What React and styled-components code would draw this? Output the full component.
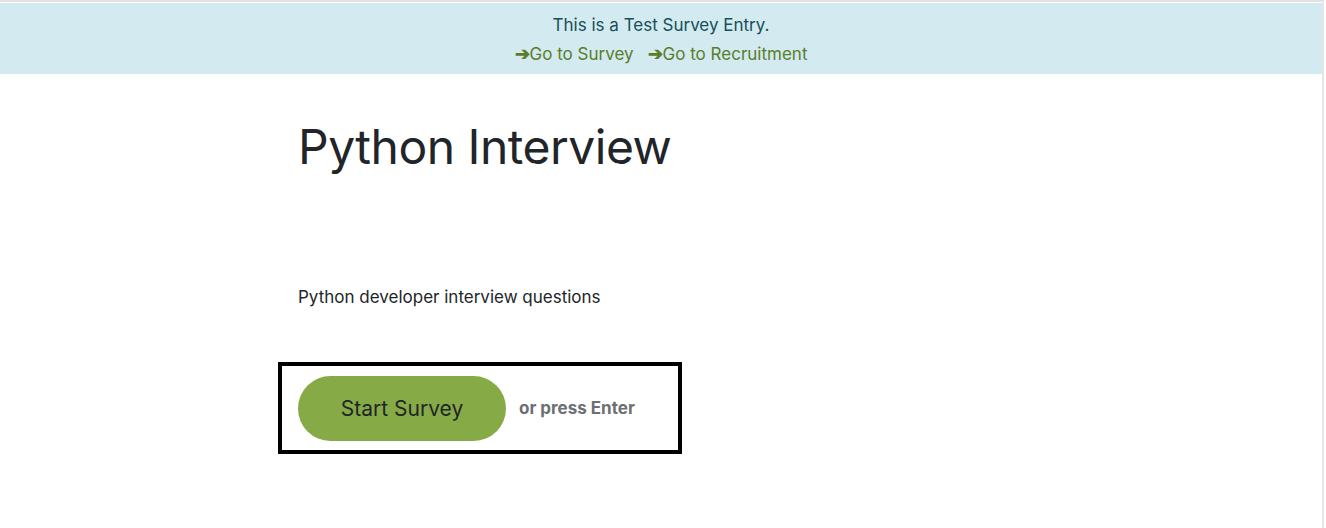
import React from "react";
import styled, { createGlobalStyle } from "styled-components";

const Global = createGlobalStyle`
  html, body { margin: 0; padding: 0; background: #ffffff; }
  body { font-family: Inter, "Noto Sans", sans-serif; color: #212529; }
`;

const Frame = styled.div`
  width: 1322px;
  height: 526px;
  border-top: 2px solid #e2e2e2;
  border-right: 2px solid #e6e6e6;
  background: #ffffff;
  overflow: hidden;
`;

const Banner = styled.div`
  margin-top: 1px;
  background: #d2eaf0;
  height: 71px;
  display: flex;
  flex-direction: column;
  align-items: center;
  padding-top: 9px;
  box-sizing: border-box;
  font-size: 17px;
`;

const BannerText = styled.div`
  color: #174f58;
  line-height: 26px;
`;

const Links = styled.div`
  display: flex;
  gap: 14px;
  line-height: 26px;
  margin-top: 3px;
`;

const Link = styled.a`
  color: #5b7d2b;
  text-decoration: none;
  font-size: 17px;
`;

const Arrow = styled.span`
  font-weight: 700;
  font-size: 18px;
`;

const Main = styled.main`
  padding-left: 298px;
  display: flex;
  flex-direction: column;
  align-items: flex-start;
`;

const Title = styled.h1`
  margin: 40px 0 0;
  font-size: 48px;
  font-weight: 400;
  line-height: 66px;
  letter-spacing: -0.5px;
  color: #212529;
`;

const Description = styled.p`
  margin: 104px 0 0;
  font-size: 17px;
  line-height: 26px;
  color: #212529;
`;

const ActionBox = styled.div`
  margin: 52px 0 0 -20px;
  width: 380px;
  height: 84px;
  border: 4px solid #000000;
  display: flex;
  align-items: center;
  gap: 13px;
  padding-left: 16px;
  box-sizing: content-box;
`;

const StartButton = styled.button`
  width: 208px;
  height: 65px;
  border: none;
  border-radius: 33px;
  background: #86aa45;
  color: #212529;
  font-family: Inter, "Noto Sans", sans-serif;
  font-size: 21px;
  font-weight: 400;
  cursor: pointer;
  padding: 0;
`;

const Hint = styled.span`
  font-size: 17px;
  font-weight: 700;
  color: #6c6f73;
`;

export default function App() {
  return (
    <>
      <Global />
      <Frame>
        <Banner>
          <BannerText>This is a Test Survey Entry.</BannerText>
          <Links>
            <Link href="#"><Arrow>➔</Arrow>Go to Survey</Link>
            <Link href="#"><Arrow>➔</Arrow>Go to Recruitment</Link>
          </Links>
        </Banner>
        <Main>
          <Title>Python Interview</Title>
          <Description>Python developer interview questions</Description>
          <ActionBox>
            <StartButton>Start Survey</StartButton>
            <Hint>or press Enter</Hint>
          </ActionBox>
        </Main>
      </Frame>
    </>
  );
}
